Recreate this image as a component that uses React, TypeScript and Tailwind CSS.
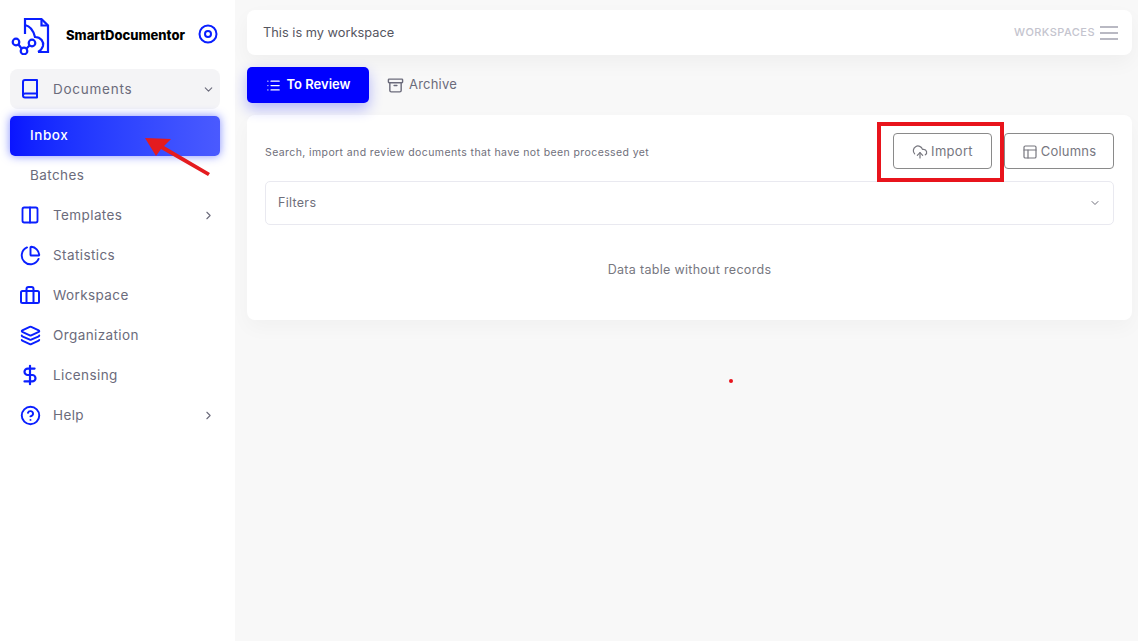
import React from 'react';
import { ChevronDown, ChevronRight, Columns2, PieChart, Layers, DollarSign, CircleHelp, List, Archive, CloudUpload, PanelsTopLeft } from 'lucide-react';

interface NavRowProps {
  label: string;
  icon: React.ReactNode;
  arrow?: boolean;
}

const NavRow: React.FC<NavRowProps> = ({ label, icon, arrow }) => (
  <div className="flex h-10 items-center pl-[8px] pr-[5px]">
    <div className="flex w-[24px] justify-center text-[#0a1fff]">{icon}</div>
    <span className="ml-[11px] flex-1 text-[13.5px] tracking-[0.4px] text-[#6b6b7b]">{label}</span>
    {arrow && <ChevronRight size={13} strokeWidth={2} className="text-[#6b6b7b]" />}
  </div>
);

const Logo = () => (
  <svg width="40" height="40" viewBox="0 0 40 40" fill="none" stroke="#0a1fff" strokeWidth="2.2">
    <path d="M15 19 V4 H31.500 L38 10.500 V37 H28" />
    <path d="M31.500 4 V10.500 H38" />
    <path d="M15 10 C20 11 23 14 25 22 C31 22 34 27 33 31 C32 34 30 36 28 37" />
    <circle cx="6" cy="27" r="3.300" />
    <circle cx="14" cy="36" r="3.300" />
    <circle cx="22" cy="28" r="3.300" />
    <path d="M8.500 29.500 L11.500 33.500 M16.500 33.500 L19.500 30.500" />
  </svg>
);

const BookIcon = () => (
  <svg width="18" height="20" viewBox="0 0 18 20" fill="none" stroke="#0a1fff" strokeWidth="2" strokeLinejoin="round">
    <path d="M2 16.500 V3 a2 2 0 0 1 2-2 H16 V18.500 H4 a2 2 0 0 1-2-2 a2 2 0 0 1 2-2 H16" />
  </svg>
);

const CaseIcon = () => (
  <svg width="20" height="18" viewBox="0 0 20 18" fill="none" stroke="#0a1fff" strokeWidth="2" strokeLinejoin="round">
    <rect x="1" y="5" width="18" height="12" rx="1.500" />
    <path d="M6.500 17 V3 a2 2 0 0 1 2-2 h3 a2 2 0 0 1 2 2 V17" />
  </svg>
);

export default function App() {
  return (
    <div className="relative flex h-[641px] w-[1138px] overflow-hidden bg-[#f8f8f8] font-['Inter','Liberation_Sans',sans-serif]">
      <aside className="w-[235px] shrink-0 bg-white pl-[10px] pr-[15px]">
        <div className="flex h-[69px] items-start pt-[15px]">
          <Logo />
          <span className="ml-[16px] mt-[11px] flex-1 text-[13px] font-extrabold text-black">SmartDocumentor</span>
          <svg width="20" height="20" viewBox="0 0 20 20" fill="none" stroke="#0a1fff" strokeWidth="2" className="mr-[2px] mt-[9px]">
            <circle cx="10" cy="10" r="8.500" />
            <circle cx="10" cy="10" r="3" />
          </svg>
        </div>
        <div className="flex h-10 items-center rounded-lg bg-[#f4f4f6] pl-[8px] pr-[5px]">
          <div className="flex w-[24px] justify-center"><BookIcon /></div>
          <span className="ml-[11px] flex-1 text-[13.5px] tracking-[0.75px] text-[#6b6b7b]">Documents</span>
          <ChevronDown size={13} strokeWidth={2} className="text-[#6b6b7b]" />
        </div>
        <div className="mt-[7px] flex h-10 items-center rounded-[5px] bg-gradient-to-r from-[#0a14ff] to-[#4a5aff] pb-[1px] pl-[20px] text-[13.5px] font-medium tracking-[0.55px] text-white shadow-[0_0_10px_rgba(30,50,255,0.55)]">Inbox</div>
        <div className="flex h-[39px] items-center pl-[20px] text-[13.5px] tracking-[0.4px] text-[#6b6b7b]">Batches</div>
        <NavRow label="Templates" arrow icon={<Columns2 size={20} strokeWidth={2.2} />} />
        <NavRow label="Statistics" icon={<PieChart size={21} strokeWidth={2.2} />} />
        <NavRow label="Workspace" icon={<CaseIcon />} />
        <NavRow label="Organization" icon={<Layers size={21} strokeWidth={2.2} />} />
        <NavRow label="Licensing" icon={<DollarSign size={22} strokeWidth={2.4} />} />
        <NavRow label="Help" arrow icon={<CircleHelp size={21} strokeWidth={2.2} />} />
      </aside>

      <main className="flex-1 pl-[12px] pr-[6px] pt-[10px]">
        <div className="flex h-[45px] items-center justify-between rounded-lg bg-white pl-[16px] pr-[14px] shadow-[0_8px_20px_rgba(0,0,0,0.04)]">
          <span className="text-[12.8px] text-[#55555f]">This is my workspace</span>
          <div className="flex items-center gap-[5px]">
            <span className="text-[11px] font-medium tracking-[0.45px] text-[#c4c4ce]">WORKSPACES</span>
            <div className="flex w-[18px] flex-col gap-[4px]">
              <div className="h-[2px] bg-[#b9b9c3]" />
              <div className="h-[2px] bg-[#b9b9c3]" />
              <div className="h-[2px] bg-[#b9b9c3]" />
            </div>
          </div>
        </div>

        <div className="mt-[12px] flex h-[36px] items-center">
          <div className="flex h-full w-[122px] items-center justify-center gap-[6px] rounded-[5px] bg-[#0000ff] text-[13px] font-semibold text-white shadow-[0_6px_14px_rgba(20,30,255,0.3)]">
            <List size={15} strokeWidth={2} />
            To Review
          </div>
          <div className="ml-[18px] flex items-center gap-[5px] text-[13px] tracking-[0.2px] text-[#6b6b7b]">
            <Archive size={17} strokeWidth={2} />
            Archive
          </div>
        </div>

        <div className="mt-[12px] h-[205px] rounded-lg bg-white px-[18px] pt-[18px] shadow-[0_8px_20px_rgba(0,0,0,0.03)]">
          <div className="flex h-[36px] items-center">
            <span className="mt-[3px] flex-1 text-[10.5px] tracking-[0.4px] text-[#6f6f7b]">Search, import and review documents that have not been processed yet</span>
            <div className="flex h-[36px] w-[99px] items-center justify-center gap-[3px] rounded-[4px] border border-[#8a8a8a] pt-[1px] text-[13px] tracking-[0.3px] text-[#77777f]">
              <CloudUpload size={16} strokeWidth={1.8} />
              Import
            </div>
            <div className="ml-[12px] flex h-[36px] w-[110px] items-center justify-center gap-[3px] rounded-[4px] border border-[#8a8a8a] pt-[1px] text-[13px] tracking-[0.2px] text-[#77777f]">
              <PanelsTopLeft size={16} strokeWidth={1.8} />
              Columns
            </div>
          </div>
          <div className="mt-[12px] flex h-[44px] items-center justify-between rounded-[5px] border border-[#e9e9f0] px-[12px]">
            <span className="text-[12.5px] tracking-[0.3px] text-[#6f6f7b]">Filters</span>
            <ChevronDown size={12} strokeWidth={2} className="text-[#6f6f7b]" />
          </div>
          <div className="mt-[36px] text-center text-[12.5px] tracking-[0.3px] text-[#77777f]">Data table without records</div>
        </div>
      </main>

      {/* screenshot annotations */}
      <div className="absolute left-[877px] top-[122px] h-[60px] w-[127px] border-4 border-[#e8141c]" />
      <svg className="absolute left-[140px] top-[130px]" width="75" height="50" viewBox="0 0 75 50">
        <polygon points="5,8 31,9 24,16 70,43 68,46 21,19 16,26" fill="#e41b1f" />
      </svg>
      <div className="absolute left-[729px] top-[379px] h-[4px] w-[4px] rounded-full bg-[#e8141c]" />
    </div>
  );
}
